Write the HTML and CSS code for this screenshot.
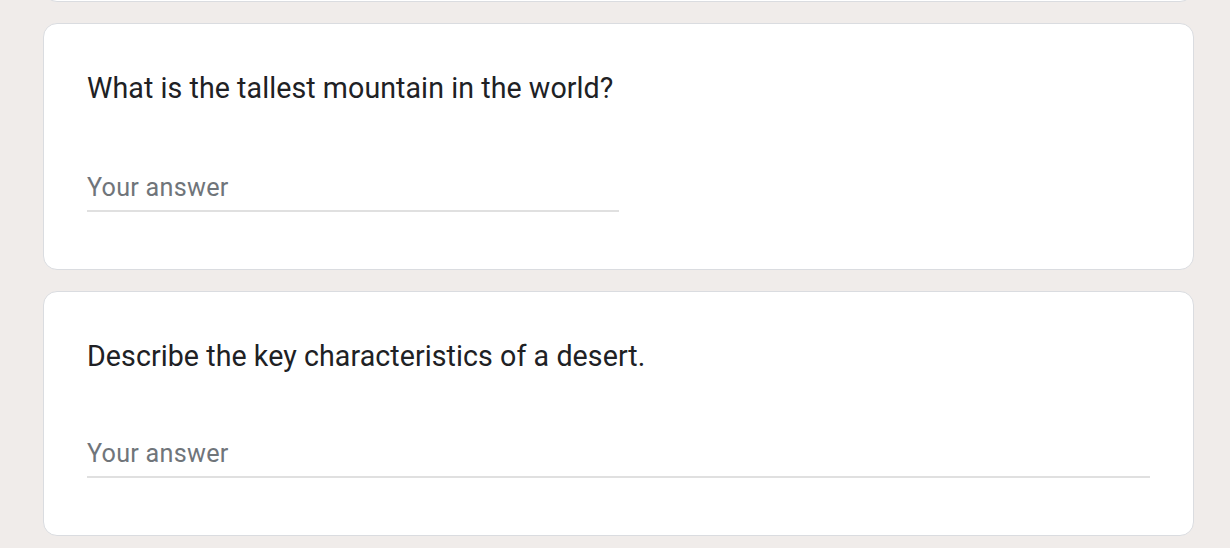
FILE: index.html
```html
<!DOCTYPE html>
<html lang="en">
<head>
<meta charset="utf-8">
<title>Form</title>
<link rel="stylesheet" href="styles.css">
</head>
<body>
<main class="form">
  <div class="card stub"></div>
  <section class="card">
    <div class="question">What is the tallest mountain in the world?</div>
    <div class="answer short"><span class="placeholder">Your answer</span></div>
  </section>
  <section class="card">
    <div class="question tight">Describe the key characteristics of a desert.</div>
    <div class="answer long"><span class="placeholder">Your answer</span></div>
  </section>
</main>
</body>
</html>
```
FILE: styles.css
```css
html, body {
  margin: 0;
  padding: 0;
}
body {
  background: #f0ecea;
  font-family: Roboto, "Liberation Sans", Arial, sans-serif;
  overflow: hidden;
}
.form {
  display: flex;
  flex-direction: column;
  gap: 21px;
  width: 1151px;
  margin-left: 43px;
}
.card {
  background: #fff;
  border: 1px solid #dadce0;
  border-radius: 14px;
  padding: 43px 43px 57px 43px;
}
.stub {
  height: 40px;
  margin-top: -40px;
  padding: 0 43px;
}
.question {
  font-size: 28.6px;
  line-height: 43px;
  letter-spacing: 0.07px;
  color: #202124;
  margin-bottom: 60px;
}
.question.tight {
  margin-bottom: 58px;
}
.answer {
  height: 42px;
  padding-bottom: 5px;
  box-sizing: border-box;
  border-bottom: 2px solid #e0e0e0;
  display: flex;
  align-items: center;
}
.answer.short {
  width: 50%;
}
.placeholder {
  font-size: 25.2px;
  letter-spacing: 0.25px;
  color: #70757a;
}
```
